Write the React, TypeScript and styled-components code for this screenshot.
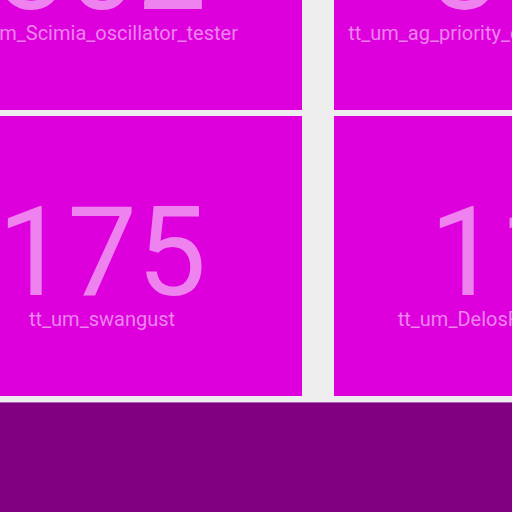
import styled, { createGlobalStyle } from "styled-components";

const GlobalStyle = createGlobalStyle`
    html, body {
        margin: 0;
        padding: 0;
        background: #eeeeee;
        overflow: hidden;
        font-family: Roboto, "Liberation Sans", sans-serif;
    }
`;

const Page = styled.div`
    width: 512px;
    height: 512px;
    overflow: hidden;
    display: flex;
    flex-direction: column;
`;

const Grid = styled.div`
    display: grid;
    grid-template-columns: repeat(2, 400px);
    grid-auto-rows: 280px;
    column-gap: 32px;
    row-gap: 6px;
    margin-left: -98px;
    margin-top: -170px;
`;

const Tile = styled.div`
    background: #dd00dd;
    color: #ee82ee;
    display: flex;
    flex-direction: column;
    align-items: center;
    justify-content: center;
    padding-top: 17px;
    box-sizing: border-box;
    overflow: hidden;
`;

const Count = styled.div`
    font-size: 124px;
    font-weight: 400;
    line-height: 108px;
    white-space: nowrap;
`;

const Name = styled.div`
    font-size: 20px;
    line-height: 24px;
    white-space: nowrap;
`;

const Footer = styled.div`
    margin-top: 6px;
    flex: 1;
    background: #800080;
    border-top: 1px solid #b060b0;
`;

const tiles = [
    { count: 302, name: "tt_um_Scimia_oscillator_tester" },
    { count: 801, name: "tt_um_ag_priority_encoder_parity_checker" },
    { count: 175, name: "tt_um_swangust" },
    { count: 117, name: "tt_um_DelosReyesJordan_HDL" },
];

const App = () => {
    return (
        <Page>
            <GlobalStyle />
            <Grid>
                {tiles.map((t) => (
                    <Tile key={t.name}>
                        <Count>{t.count}</Count>
                        <Name>{t.name}</Name>
                    </Tile>
                ))}
            </Grid>
            <Footer />
        </Page>
    );
};

export default App;
